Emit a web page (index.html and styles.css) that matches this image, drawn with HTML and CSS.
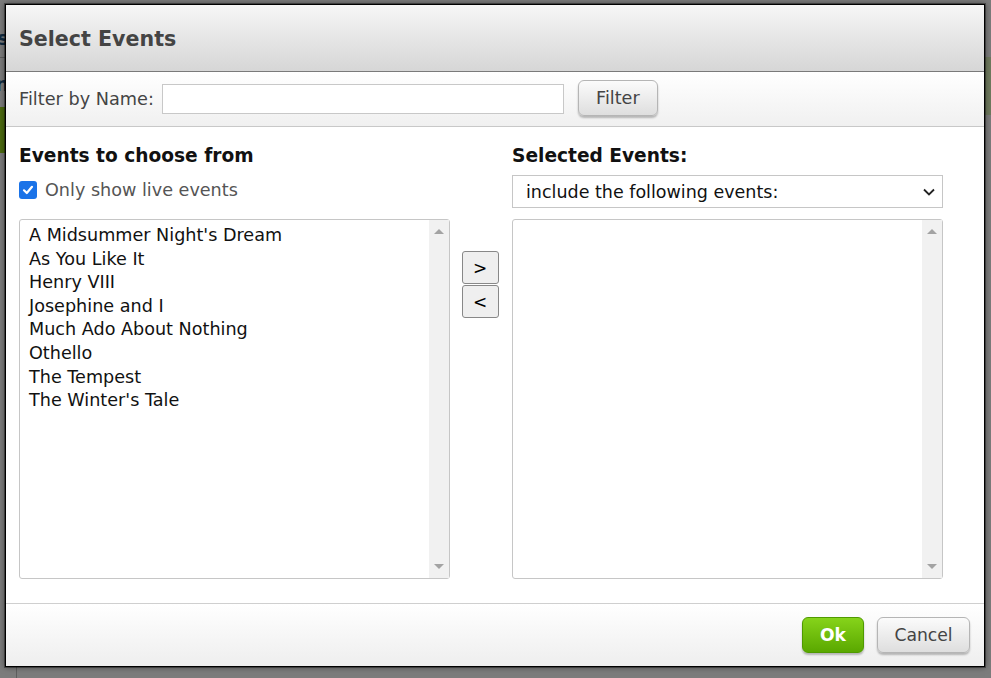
FILE: index.html
```html
<!DOCTYPE html>
<html>
<head>
<meta charset="utf-8">
<link rel="stylesheet" href="styles.css">
</head>
<body>
<div class="backdrop">
  <div class="bg-s">s</div>
  <div class="bg-line bg-line1"></div>
  <div class="bg-n">n</div>
  <div class="bg-green"></div>
  <div class="bg-green-r"></div>
  <div class="bg-vline"></div>
</div>
<div class="dialog">
  <div class="dlg-header"><h1 class="dlg-title">Select Events</h1></div>
  <div class="filter-bar">
    <label class="filter-label">Filter by Name:</label>
    <input class="filter-input" type="text">
    <button class="btn btn-filter">Filter</button>
  </div>
  <div class="dlg-body">
    <div class="col">
      <h2 class="col-title">Events to choose from</h2>
      <label class="live-row">
        <span class="checkbox"><svg width="14" height="14" viewBox="0 0 14 14"><path d="M3 7.3 L5.8 10 L11 3.8" fill="none" stroke="#fff" stroke-width="2.2" stroke-linecap="round" stroke-linejoin="round"/></svg></span>
        <span class="live-text">Only show live events</span>
      </label>
      <div class="listbox">
        <div class="list-items">
          <div>A Midsummer Night's Dream</div>
          <div>As You Like It</div>
          <div>Henry VIII</div>
          <div>Josephine and I</div>
          <div>Much Ado About Nothing</div>
          <div>Othello</div>
          <div>The Tempest</div>
          <div>The Winter's Tale</div>
        </div>
        <div class="scrollbar"><span class="arr-up"></span><span class="arr-down"></span></div>
      </div>
    </div>
    <div class="mid">
      <button class="btn-move">&gt;</button>
      <button class="btn-move">&lt;</button>
    </div>
    <div class="col">
      <h2 class="col-title">Selected Events:</h2>
      <div class="selectbox">
        <span>include the following events:</span>
        <svg width="14" height="10" viewBox="0 0 14 10"><path d="M2 2.5 L7 7.5 L12 2.5" fill="none" stroke="#222" stroke-width="1.8"/></svg>
      </div>
      <div class="listbox">
        <div class="list-items"></div>
        <div class="scrollbar"><span class="arr-up"></span><span class="arr-down"></span></div>
      </div>
    </div>
  </div>
  <div class="dlg-footer">
    <button class="btn btn-ok">Ok</button>
    <button class="btn btn-cancel">Cancel</button>
  </div>
</div>
</body>
</html>
```
FILE: styles.css
```css
* { box-sizing: border-box; }
html, body { margin: 0; padding: 0; }
body {
  width: 991px; height: 678px; overflow: hidden;
  background: #7c7c7c;
  font-family: "DejaVu Sans", Verdana, sans-serif;
  position: relative;
}
.backdrop { position: absolute; inset: 0; }
.bg-s { position: absolute; left: -3px; top: 26px; font: bold 20px "DejaVu Sans", sans-serif; color: #102a40; }
.bg-n { position: absolute; left: -5px; top: 72px; font: bold 20px "DejaVu Sans", sans-serif; color: #102a40; }
.bg-line { position: absolute; left: 0; width: 5px; height: 1px; background: #5e5e5e; }
.bg-line1 { top: 57px; }
.bg-green { position: absolute; left: 0; top: 107px; width: 5px; height: 46px; background: #4c6a10; }
.bg-green-r { position: absolute; right: 0; top: 57px; width: 6px; height: 58px; background: #6f7a5e; }
.bg-vline { position: absolute; left: 16px; top: 667px; width: 1px; height: 11px; background: #5e5e5e; }

.dialog {
  position: absolute; left: 5px; top: 4px;
  width: 980px; height: 663px;
  border: 1px solid #000;
  box-shadow: 0 0 0 1px rgba(0,0,0,0.35), 0 0 6px rgba(0,0,0,0.5);
  background: #fff;
  display: flex; flex-direction: column;
}
.dlg-header {
  height: 67px;
  background: linear-gradient(#f6f6f6, #d6d6d6);
  border-bottom: 1px solid #7a7a7a;
  display: flex; align-items: center;
  padding-left: 13px; padding-top: 1px;
}
.dlg-title { margin: 0; font-size: 20.6px; font-weight: bold; color: #444; }

.filter-bar {
  height: 55px;
  background: linear-gradient(#ffffff, #f0f0f0);
  border-bottom: 1px solid #c8c8c8;
  display: flex; align-items: center;
  padding-left: 13px;
}
.filter-label { font-size: 17.7px; color: #444; margin-right: 8px; }
.filter-input {
  width: 402px; height: 30px; border: 1px solid #c8c8c8; background: #fff; margin: 0;
  margin-top: -1px;
}
.btn {
  font-family: "DejaVu Sans", Verdana, sans-serif;
  border-radius: 6px; cursor: pointer;
}
.btn-filter {
  margin-left: 14px; width: 80px; height: 36px; margin-top: -2px;
  font-size: 17.6px; color: #444;
  border: 1px solid #b5b5b5;
  background: linear-gradient(#fbfbfb, #dedede);
  box-shadow: 0 2px 2px rgba(0,0,0,0.25);
}

.dlg-body {
  flex: 1;
  display: flex;
  padding: 16px 0 0 13px;
}
.col { width: 431px; display: flex; flex-direction: column; }
.col-title { margin: 0; font-size: 18.6px; font-weight: bold; color: #111; height: 28px; line-height: 26px; }
.live-row { display: flex; align-items: flex-start; height: 48px; padding-top: 10px; }
.checkbox {
  width: 18px; height: 18px; border-radius: 3px; background: #1a73e8;
  display: inline-flex; align-items: center; justify-content: center; margin-right: 8px;
}
.live-text { font-size: 17.6px; color: #555; line-height: 18px; }
.listbox {
  height: 360px; border: 1px solid #c6c6c6; border-radius: 3px;
  display: flex; background: #fff;
}
.list-items { flex: 1; padding: 4px 0 0 9px; font-size: 17.6px; color: #111; line-height: 23.6px; }
.scrollbar { width: 20px; background: #f1f1f1; position: relative; }
.arr-up, .arr-down { position: absolute; left: 5px; width: 0; height: 0; border-left: 5px solid transparent; border-right: 5px solid transparent; }
.arr-up { top: 9px; border-bottom: 5px solid #a3a3a3; }
.arr-down { bottom: 9px; border-top: 5px solid #a3a3a3; }

.mid { width: 62px; display: flex; flex-direction: column; align-items: center; padding-top: 108px; gap: 1px; padding-right: 2px; }
.btn-move {
  width: 37px; height: 33px; border: 1px solid #888; border-radius: 3px;
  background: #efefef; font-size: 17px; color: #000; padding: 0;
  font-family: "DejaVu Sans", sans-serif;
}

.selectbox {
  height: 33px; border: 1px solid #c6c6c6; margin-bottom: 11px;
  display: flex; align-items: center; justify-content: space-between;
  padding: 0 6px 0 13px; font-size: 17.5px; color: #111;
  margin-top: 4px;
}

.dlg-footer {
  height: 63px;
  border-top: 1px solid #cfcfcf;
  background: linear-gradient(#ffffff, #eeeeee);
  display: flex; align-items: center; justify-content: flex-end;
  padding-right: 14px; gap: 13px;
}
.btn-ok {
  width: 62px; height: 36px; font-size: 17.2px; font-weight: bold; color: #fff;
  border: 1px solid #4f9a00;
  background: linear-gradient(#86d31a, #5aa800);
  box-shadow: 0 2px 2px rgba(0,0,0,0.25);
}
.btn-cancel {
  width: 93px; height: 36px; font-size: 17.2px; color: #444;
  border: 1px solid #b5b5b5;
  background: linear-gradient(#fbfbfb, #dedede);
  box-shadow: 0 2px 2px rgba(0,0,0,0.25);
}
```
